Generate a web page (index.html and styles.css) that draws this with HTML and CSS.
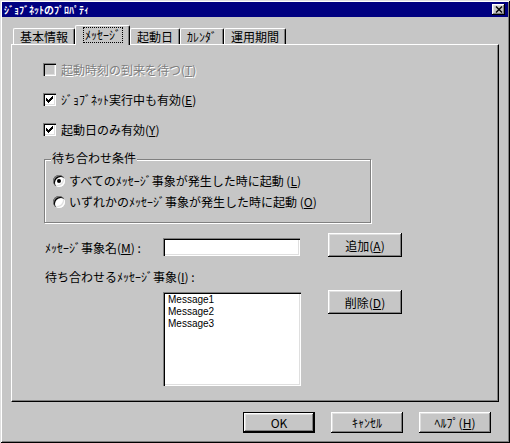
FILE: index.html
```html
<!DOCTYPE html>
<html lang="ja">
<head>
<meta charset="utf-8">
<title>ｼﾞｮﾌﾞﾈｯﾄのﾌﾟﾛﾊﾟﾃｨ</title>
<link rel="stylesheet" href="styles.css">
</head>
<body>
<div class="window">
  <div class="titlebar">
    <span class="title">ｼﾞｮﾌﾞﾈｯﾄのﾌﾟﾛﾊﾟﾃｨ</span>
    <span class="close"><svg width="8" height="7" viewBox="0 0 8 7"><path d="M1 0.5 L7 6.5 M7 0.5 L1 6.5" stroke="#000" stroke-width="1.4" fill="none"/></svg></span>
  </div>
  <div class="body">
    <div class="tabs">
      <div class="tab">基本情報</div>
      <div class="tab active"><span class="focus">ﾒｯｾｰｼﾞ</span></div>
      <div class="tab">起動日</div>
      <div class="tab">ｶﾚﾝﾀﾞ</div>
      <div class="tab">運用期間</div>
    </div>
    <div class="panel">
      <div class="check-row disabled">
        <span class="checkbox"></span>
        <span class="label">起動時刻の到来を待つ(<u>T</u>)</span>
      </div>
      <div class="check-row">
        <span class="checkbox"><svg width="13" height="13" viewBox="0 0 13 13" shape-rendering="crispEdges"><path d="M3 5 L5 7 L10 2 L10 5 L5 10 L3 8 Z" fill="#000"/></svg></span>
        <span class="label">ｼﾞｮﾌﾞﾈｯﾄ実行中も有効(<u>E</u>)</span>
      </div>
      <div class="check-row">
        <span class="checkbox"><svg width="13" height="13" viewBox="0 0 13 13" shape-rendering="crispEdges"><path d="M3 5 L5 7 L10 2 L10 5 L5 10 L3 8 Z" fill="#000"/></svg></span>
        <span class="label">起動日のみ有効(<u>Y</u>)</span>
      </div>
      <div class="group">
        <span class="legend">待ち合わせ条件</span>
        <div class="radio-row">
          <span class="radio on"></span>
          <span class="label">すべてのﾒｯｾｰｼﾞ事象が発生した時に起動 (<u>L</u>)</span>
        </div>
        <div class="radio-row">
          <span class="radio"></span>
          <span class="label">いずれかのﾒｯｾｰｼﾞ事象が発生した時に起動 (<u>O</u>)</span>
        </div>
      </div>
      <div class="field-row">
        <span class="field-label">ﾒｯｾｰｼﾞ事象名(<u>M</u>) :</span>
        <div class="textbox"></div>
        <div class="button side">追加(<u>A</u>)</div>
      </div>
      <div class="list-label">待ち合わせるﾒｯｾｰｼﾞ事象(<u>I</u>) :</div>
      <div class="list-row">
        <div class="listbox">
          <div class="item">Message1</div>
          <div class="item">Message2</div>
          <div class="item">Message3</div>
        </div>
        <div class="button side">削除(<u>D</u>)</div>
      </div>
    </div>
    <div class="buttons">
      <div class="button default">OK</div>
      <div class="button">ｷｬﾝｾﾙ</div>
      <div class="button">ﾍﾙﾌﾟ(<u>H</u>)</div>
    </div>
  </div>
</div>
</body>
</html>
```

FILE: styles.css
```css
* { box-sizing: border-box; }
html, body { margin: 0; padding: 0; }
body {
  width: 510px;
  height: 443px;
  overflow: hidden;
  background: #c6c6c6;
  font-family: "Noto Sans CJK JP", sans-serif;
  font-size: 12px;
  color: #000;
}
u { text-decoration: underline; text-underline-offset: 1px; }

.window {
  width: 510px;
  height: 443px;
  padding: 2px;
  background: #c6c6c6;
  box-shadow: inset 1px 1px 0 #dfdfdf, inset -1px -1px 0 #000,
              inset 2px 2px 0 #fff, inset -2px -2px 0 #808080;
}

.titlebar {
  height: 15px;
  background: #000080;
  display: flex;
  align-items: center;
  justify-content: space-between;
  padding: 0 3px 0 2px;
}
.title {
  color: #fff;
  font-weight: bold;
  font-size: 10px;
  line-height: 15px;
  white-space: nowrap;
}
.close {
  width: 13px;
  height: 11px;
  background: #c6c6c6;
  display: flex;
  align-items: center;
  justify-content: center;
  box-shadow: inset -1px -1px 0 #000, inset 1px 1px 0 #fff,
              inset -2px -2px 0 #808080, inset 2px 2px 0 #dfdfdf;
}
.close svg { display: block; }

.body { padding: 8px 9px 0; }

.tabs {
  display: flex;
  align-items: flex-end;
  height: 19px;
  padding-left: 2px;
}
.tab {
  height: 16px;
  padding: 0 6px;
  line-height: 15px;
  border-top: 1px solid #fff;
  border-left: 1px solid #fff;
  border-right: 1px solid #000;
  border-radius: 2px 2px 0 0;
  box-shadow: inset -1px 0 0 #808080;
  white-space: nowrap;
}
.tab.active {
  height: 20px;
  padding: 0 6px 0 7px;
  margin-bottom: -1px;
  position: relative;
  z-index: 1;
  background: #c6c6c6;
}
.focus {
  display: inline-block;
  margin-top: 1px;
  padding: 0 2px;
  height: 16px;
  line-height: 15px;
  outline: 1px dotted #000;
  outline-offset: -1px;
}

.panel {
  height: 358px;
  border-top: 1px solid #fff;
  border-left: 1px solid #fff;
  border-right: 1px solid #000;
  border-bottom: 1px solid #000;
  box-shadow: inset -1px -1px 0 #808080;
  padding: 18px 0 0 31px;
}

.check-row {
  display: flex;
  align-items: center;
  height: 13px;
  line-height: 13px;
  margin-bottom: 17px;
  white-space: nowrap;
}
.checkbox {
  flex: none;
  width: 13px;
  height: 13px;
  margin-right: 5px;
  background: #fff;
  box-shadow: inset 1px 1px 0 #808080, inset 2px 2px 0 #000,
              inset -1px -1px 0 #fff, inset -2px -2px 0 #dfdfdf;
}
.checkbox svg { display: block; }
.check-row.disabled .checkbox { background: #c6c6c6; }
.check-row.disabled .label { color: #808080; text-shadow: 1px 1px 0 #fff; }

.group {
  position: relative;
  margin: 23px 0 0 1px;
  width: 327px;
  height: 64px;
  border: 1px solid #808080;
  box-shadow: 1px 1px 0 #fff, inset 1px 1px 0 #fff;
  padding: 14px 0 0 8px;
}
.legend {
  position: absolute;
  top: -9px;
  left: 6px;
  padding: 0 1px;
  line-height: 13px;
  background: #c6c6c6;
  white-space: nowrap;
}
.radio-row {
  display: flex;
  align-items: center;
  height: 14px;
  line-height: 14px;
  margin-bottom: 7px;
  white-space: nowrap;
}
.radio {
  flex: none;
  position: relative;
  width: 12px;
  height: 12px;
  margin-right: 4px;
  border-radius: 50%;
  background: #fff;
  box-shadow: inset 1px 1px 0 #808080, inset 2px 2px 0 #000,
              inset -1px -1px 0 #fff, inset -2px -2px 0 #dfdfdf;
}
.radio.on::after {
  content: "";
  position: absolute;
  left: 4px;
  top: 4px;
  width: 4px;
  height: 4px;
  border-radius: 50%;
  background: #000;
}

.field-row {
  display: flex;
  align-items: flex-start;
  margin: 10px 0 0 2px;
}
.field-label {
  width: 118px;
  margin-top: 8px;
  line-height: 14px;
  white-space: nowrap;
}
.textbox {
  width: 137px;
  height: 18px;
  margin-top: 5px;
  background: #fff;
  box-shadow: inset 1px 1px 0 #808080, inset 2px 2px 0 #000,
              inset -1px -1px 0 #fff, inset -2px -2px 0 #dfdfdf;
}
.list-label {
  margin: 13px 0 0 2px;
  line-height: 14px;
  white-space: nowrap;
}
.list-row {
  display: flex;
  align-items: flex-start;
  margin: 6px 0 0 120px;
}
.listbox {
  width: 138px;
  height: 94px;
  margin-top: 2px;
  padding: 2px 5px;
  font-family: "Liberation Sans", sans-serif;
  font-size: 10px;
  background: #fff;
  box-shadow: inset 1px 1px 0 #808080, inset 2px 2px 0 #000,
              inset -1px -1px 0 #fff, inset -2px -2px 0 #dfdfdf;
}
.item { height: 12px; line-height: 12px; }

.button {
  display: flex;
  align-items: center;
  justify-content: center;
  width: 72px;
  height: 21px;
  background: #c6c6c6;
  white-space: nowrap;
  box-shadow: inset -1px -1px 0 #000, inset 1px 1px 0 #fff,
              inset -2px -2px 0 #808080, inset 2px 2px 0 #dfdfdf;
}
.button.side { width: 74px; height: 24px; }
.field-row .button.side { margin-left: 28px; }
.list-row .button.side { margin-left: 27px; }
.button.default { border: 1px solid #000; }

.buttons {
  display: flex;
  justify-content: flex-end;
  gap: 16px;
  margin-top: 10px;
  padding-right: 8px;
}
```
